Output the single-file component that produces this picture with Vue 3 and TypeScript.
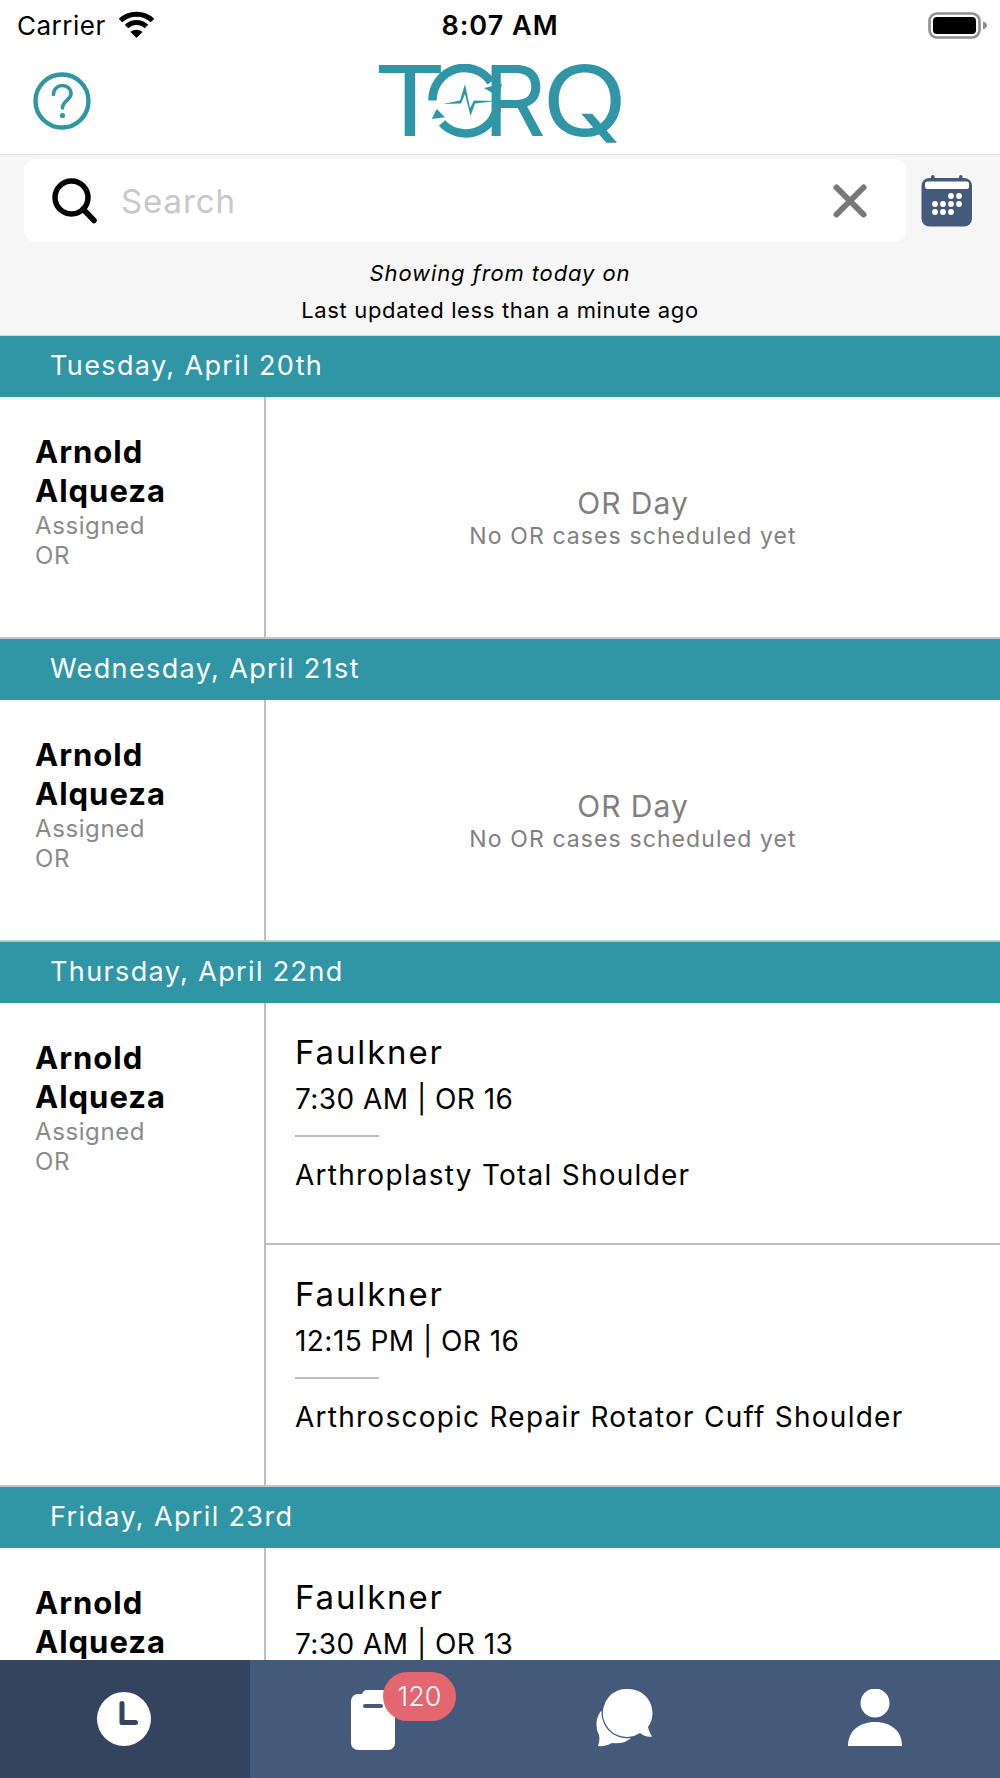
<script setup lang="ts">
interface CaseItem { surgeon: string; time: string; proc: string }
interface Day { label: string; cases: CaseItem[] }
const days: Day[] = [
  { label: 'Tuesday, April 20th', cases: [] },
  { label: 'Wednesday, April 21st', cases: [] },
  { label: 'Thursday, April 22nd', cases: [
    { surgeon: 'Faulkner', time: '7:30 AM | OR 16', proc: 'Arthroplasty Total Shoulder' },
    { surgeon: 'Faulkner', time: '12:15 PM | OR 16', proc: 'Arthroscopic Repair Rotator Cuff Shoulder' },
  ] },
  { label: 'Friday, April 23rd', cases: [
    { surgeon: 'Faulkner', time: '7:30 AM | OR 13', proc: 'Arthroplasty Total Shoulder' },
  ] },
]
const dots: [number, number][] = [
  [30, 20], [38, 20], [14, 28], [22, 28], [30, 28], [38, 28], [14, 36], [22, 36], [30, 36],
]
</script>

<template>
  <div class="app">
    <div class="status">
      <div class="st-left">
        <span>Carrier</span>
        <svg class="wifi" viewBox="0 0 37 27" width="37" height="27">
          <path d="M2.500 9.500C11 1 26 1 34.500 9.500" fill="none" stroke="#000" stroke-width="5" />
          <path d="M8.500 15.500C14 10 23 10 28.500 15.500" fill="none" stroke="#000" stroke-width="5" />
          <path d="M12.500 21C16 18 21 18 24.500 21L18.500 27Z" fill="#000" />
        </svg>
      </div>
      <div class="st-time">8:07 AM</div>
      <div class="st-right">
        <svg viewBox="0 0 59 27" width="59" height="27">
          <rect x="1.500" y="1.500" width="50" height="24" rx="7.500" fill="none" stroke="#8f8f8f" stroke-width="2.600" />
          <rect x="5" y="5" width="43" height="17" rx="4" fill="#000" />
          <path d="M55 9.500c2.500 .8 4 2.200 4 4s-1.500 3.200-4 4z" fill="#8f8f8f" />
        </svg>
      </div>
    </div>

    <header class="head">
      <svg class="help" viewBox="0 0 58 58" width="58" height="58">
        <circle cx="29" cy="29" r="26.500" fill="none" stroke="#3096a5" stroke-width="4.400" />
        <path d="M20.500 22.500c0-5.500 4-9 8.800-9s8.700 3.400 8.700 8c0 6.800-8.500 7-8.500 14.500" fill="none" stroke="#3096a5" stroke-width="3.600" stroke-linecap="round" />
        <circle cx="29.500" cy="43.500" r="2.600" fill="#3096a5" />
      </svg>
      <div class="logo" aria-label="TORQ">
        <span class="lg-t">T</span>
        <svg class="lg-o" viewBox="0 0 74 74" width="74" height="74">
          <path d="M4.500 36.500A32 32 0 0 1 63 18" fill="none" stroke="#3096a5" stroke-width="8.500" />
          <path d="M56 24L74 20 71 33Z" fill="#3096a5" />
          <path d="M69 44A32 32 0 0 1 14 59" fill="none" stroke="#3096a5" stroke-width="8.500" />
          <path d="M3.700 55L8.700 45 17 53.300Z" fill="#3096a5" />
          <path d="M15 40L32 36.500 37 20 42 44 46 36.500 69 37 47 39.500 42.500 52 37 30 33 39.500Z" fill="#3096a5" />
        </svg>
        <span class="lg-r">R</span>
        <span class="lg-q">Q</span>
      </div>
    </header>

    <section class="filter">
      <div class="search-row">
        <div class="search">
          <svg viewBox="0 0 46 46" width="46" height="46">
            <circle cx="19.500" cy="19.500" r="16.500" fill="none" stroke="#000" stroke-width="5.500" />
            <path d="M31 31L42 42.500" stroke="#000" stroke-width="5.500" stroke-linecap="round" />
          </svg>
          <span class="placeholder">Search</span>
          <svg class="x" viewBox="0 0 36 36" width="36" height="36">
            <path d="M4.500 4.500L31.500 31.500M31.500 4.500L4.500 31.500" stroke="#777" stroke-width="6" stroke-linecap="round" />
          </svg>
        </div>
        <svg class="cal" viewBox="0 0 52 52" width="52" height="52">
          <rect x="0.500" y="3" width="50.500" height="48.500" rx="8" fill="#455a7a" />
          <rect x="10" y="0" width="3.600" height="6" rx="1.800" fill="#455a7a" />
          <rect x="38" y="0" width="3.600" height="6" rx="1.800" fill="#455a7a" />
          <rect x="4" y="6.500" width="44" height="7.500" rx="2.500" fill="#fff" />
          <circle v-for="(d, i) in dots" :key="i" :cx="d[0]" :cy="d[1] + 1" r="2.900" fill="#fff" />
        </svg>
      </div>
      <p class="showing">Showing from today on</p>
      <p class="updated">Last updated less than a minute ago</p>
    </section>

    <main class="list">
      <template v-for="day in days" :key="day.label">
        <div class="date">{{ day.label }}</div>
        <div class="row">
          <div class="person">
            <div class="name">Arnold<br />Alqueza</div>
            <div class="meta">Assigned<br />OR</div>
          </div>
          <div class="detail">
            <div v-if="!day.cases.length" class="empty">
              <div class="e1">OR Day</div>
              <div class="e2">No OR cases scheduled yet</div>
            </div>
            <div v-for="(c, i) in day.cases" :key="i" class="case">
              <div class="surgeon">{{ c.surgeon }}</div>
              <div class="time">{{ c.time }}</div>
              <div class="rule"></div>
              <div class="proc">{{ c.proc }}</div>
            </div>
          </div>
        </div>
      </template>
    </main>

    <nav class="tabs">
      <div class="tab active">
        <svg viewBox="0 0 54 54" width="54" height="54">
          <circle cx="27" cy="27" r="27" fill="#fff" />
          <path d="M25 11.500V30.500H38.500" fill="none" stroke="#34435e" stroke-width="5" stroke-linecap="round" stroke-linejoin="round" />
        </svg>
      </div>
      <div class="tab">
        <div class="clip">
          <svg viewBox="0 0 46 62" width="46" height="62">
            <path d="M12 6a5 5 0 0 1 5-5H32a5 5 0 0 1 5 5V5H38a7 7 0 0 1 7 7V54a7 7 0 0 1-7 7H8a7 7 0 0 1-7-7V12a7 7 0 0 1 7-7h4z" fill="#fff" />
            <rect x="13" y="15" width="20" height="4" rx="2" fill="#455a7a" />
          </svg>
          <span class="badge">120</span>
        </div>
      </div>
      <div class="tab">
        <svg viewBox="0 0 60 58" width="60" height="58">
          <path d="M6 22C1 28 0 38 4 46C5 50 4 54 3 57C8 58 13 56 17 54C24 55 30 54 36 49L36 30Z" fill="#fff" />
          <path d="M33.500 0a24 24 0 0 1 19.500 38c.5 3 2 6 4 9.500c-4 1-9-1-12-3.500a24 24 0 1 1-11.500-44z" fill="#fff" stroke="#455a7a" stroke-width="2.400" paint-order="stroke" />
        </svg>
      </div>
      <div class="tab">
        <svg viewBox="0 0 54 58" width="54" height="58">
          <ellipse cx="27" cy="14" rx="14.500" ry="14.500" fill="#fff" />
          <path d="M0 57C0 42 11 33 27 33C43 33 54 42 54 57Z" fill="#fff" />
        </svg>
      </div>
    </nav>
  </div>
</template>

<style scoped>
.app {
  width: 1000px;
  height: 1778px;
  display: flex;
  flex-direction: column;
  overflow: hidden;
  background: #fff;
  font-family: Inter, "Liberation Sans", sans-serif;
  color: #000;
}
.status {
  flex: none;
  height: 50px;
  display: grid;
  grid-template-columns: 1fr auto 1fr;
  align-items: center;
  padding: 0 13px;
}
.st-left {
  display: flex;
  align-items: center;
  gap: 12px;
  padding-left: 4px;
  font-size: 26px;
  letter-spacing: 0.5px;
}
.wifi { margin-top: -2px; }
.st-time {
  font-size: 27px;
  font-weight: 600;
  letter-spacing: 1px;
}
.st-right { display: flex; justify-content: flex-end; }
.head {
  flex: none;
  height: 105px;
  box-sizing: border-box;
  border-bottom: 1px solid #e3e3e3;
  position: relative;
  display: flex;
  align-items: center;
  justify-content: center;
}
.help {
  position: absolute;
  left: 33px;
  top: 22px;
}
.logo {
  display: flex;
  align-items: center;
  height: 74px;
  margin-top: -3px;
  color: #3096a5;
  font-family: Inter, sans-serif;
  font-weight: 400;
  font-size: 98px;
  line-height: 74px;
}
.lg-t { width: 60px; margin-right: -10px; text-align: center; transform: scaleX(1.15); }
.lg-o { flex: none; position: relative; z-index: 1; }
.lg-r { width: 64px; margin-left: -19px; margin-right: -5px; transform-origin: left; }
.lg-q { width: 80px; transform: scaleX(1.14); transform-origin: left; }
.filter {
  flex: none;
  height: 181px;
  box-sizing: border-box;
  background: #f6f6f6;
  border-bottom: 1px solid #d9d9d9;
  padding-top: 4px;
}
.search-row {
  display: flex;
  align-items: center;
  padding-left: 24px;
}
.search {
  width: 882px;
  height: 83px;
  box-sizing: border-box;
  background: #fff;
  border-radius: 12px;
  display: flex;
  align-items: center;
  padding: 0 38px 0 28px;
}
.placeholder {
  flex: 1;
  margin-left: 23px;
  font-size: 33px;
  letter-spacing: 0.9px;
  color: #c8c8c8;
}
.cal { margin-left: 15px; margin-top: 1px; }
.showing, .updated {
  margin: 0;
  text-align: center;
  font-size: 22px;
}
.showing { margin-top: 16px; line-height: 30px; font-style: italic; letter-spacing: 0.88px; }
.updated { margin-top: 7px; line-height: 30px; letter-spacing: 0.64px; }
.list {
  flex: 1;
  min-height: 0;
  overflow: hidden;
}
.date {
  height: 60.5px;
  box-sizing: border-box;
  background: #3096a5;
  color: #fff;
  padding-left: 50px;
  font-size: 27px;
  line-height: 60px;
  letter-spacing: 1.37px;
}
.row {
  display: flex;
  border-bottom: 2px solid #c4c4c4;
}
.person {
  flex: none;
  width: 266px;
  box-sizing: border-box;
  padding: 35px 0 0 35px;
  border-right: 2px solid #bdbdbd;
}
.name {
  font-size: 31px;
  font-weight: 700;
  line-height: 39px;
  letter-spacing: 1px;
}
.meta {
  margin-top: 1px;
  font-size: 24px;
  line-height: 30px;
  letter-spacing: 0.6px;
  color: #8a8a8a;
}
.detail { flex: 1; min-width: 0; }
.empty {
  height: 240.5px;
  box-sizing: border-box;
  padding-top: 88px;
  text-align: center;
  color: #808080;
}
.e1 { font-size: 30px; line-height: 36px; letter-spacing: 1px; }
.e2 { font-size: 23px; line-height: 30px; letter-spacing: 1.1px; }
.case {
  height: 240.5px;
  box-sizing: border-box;
  padding: 28px 0 0 29px;
}
.case + .case { height: 242px; border-top: 2px solid #bdbdbd; }
.surgeon { font-size: 33px; line-height: 42px; letter-spacing: 1.86px; }
.time { margin-top: 8px; font-size: 28px; line-height: 36px; letter-spacing: 0.45px; }
.rule { width: 84px; height: 2px; background: #bdbdbd; margin-top: 18px; }
.proc { margin-top: 20px; font-size: 28px; line-height: 36px; letter-spacing: 1.25px; }
.tabs {
  flex: none;
  height: 118px;
  display: grid;
  grid-template-columns: repeat(4, 1fr);
  background: #455a7a;
  position: relative;
  z-index: 2;
}
.tab {
  display: flex;
  align-items: flex-start;
  justify-content: center;
  padding-top: 29px;
  box-sizing: border-box;
}
.active { background: #34435e; padding: 32px 3px 0 0; }
.clip { position: relative; width: 46px; margin-left: -4px; }
.badge {
  position: absolute;
  left: 33px;
  top: -17px;
  width: 73px;
  height: 49px;
  border-radius: 25px;
  background: #e4666e;
  color: #fff;
  font-size: 27px;
  font-weight: 300;
  line-height: 49px;
  text-align: center;
}
</style>
